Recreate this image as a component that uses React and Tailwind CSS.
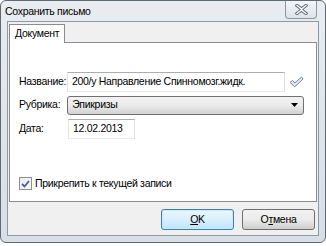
const CloseIcon = () => (
  <svg width="13" height="11" viewBox="0 0 13 11">
    <path d="M2 1.5L6.5 5L11 1.5M2 9.5L6.5 6L11 9.5" stroke="#5a6470" strokeWidth="3.2" strokeLinecap="square" fill="none" />
    <path d="M2 1.5L6.5 5L11 1.5M2 9.5L6.5 6L11 9.5" stroke="#ffffff" strokeWidth="1.4" strokeLinecap="square" fill="none" />
  </svg>
);

const CheckMark = () => (
  <svg width="15" height="12" viewBox="0 0 15 12">
    <path d="M1 6.5L3.5 4.5L5.8 7L12.5 1L14 3L5.8 10.8Z" fill="#e4e6f2" stroke="#7a86a8" strokeWidth="1" strokeLinejoin="round" />
  </svg>
);

const Arrow = () => (
  <svg width="7" height="4" viewBox="0 0 7 4">
    <path d="M0 0H7L3.5 4Z" fill="#000" />
  </svg>
);

export default function App() {
  return (
    <div className="w-[326px] h-[246px] bg-white tracking-[-0.3px]" style={{ fontFamily: '"Liberation Sans", Arial, sans-serif' }}>
      <div className="h-[243px] flex flex-col rounded-[6px] border border-[#5f6a76] bg-gradient-to-b from-[#e9edf1] via-[#dfe5eb] to-[#d7dee6] overflow-hidden">
        <div className="h-[20px] flex items-start justify-between">
          <span className="pl-[4px] pt-[3px] text-[10.5px] leading-[14px] text-black">Сохранить письмо</span>
          <div className="mr-[8px] w-[32px] h-[18px] flex items-center justify-center rounded-b-[4px] border border-t-0 border-[#8c96a2] bg-gradient-to-b from-[#f4f6f8] to-[#dde3e9]">
            <CloseIcon />
          </div>
        </div>
        <div className="flex-1 mx-[6px] mb-[6px] flex flex-col border border-[#8d99a7] bg-[#f0f0f0]">
          <div className="h-[20px] pl-[1px] pt-[2px] flex items-end">
            <div className="h-[19px] -mb-px relative z-10 px-[5px] flex items-center border border-b-0 border-[#898c95] bg-white text-[10.5px] text-black">
              Документ
            </div>
          </div>
          <div className="h-[160px] mx-[1px] border border-[#898c95] bg-white pl-[9px] pr-[12px] pt-[29px] flex flex-col text-[10.5px] text-black">
            <div className="flex items-center h-[20px]">
              <span className="w-[49px]">Название:</span>
              <div className="w-[223px] h-[20px] border border-[#abadb3] border-l-[#e2e3ea] border-r-[#dbdfe6] border-b-[#e3e9ef] flex items-center pl-[4px]">
                200/у Направление Спинномозг.жидк.
              </div>
              <div className="ml-[4px]"><CheckMark /></div>
            </div>
            <div className="flex items-center h-[20px] mt-[3px]">
              <span className="w-[49px]">Рубрика:</span>
              <div className="w-[241px] h-[19px] rounded-[3px] border border-[#707070] bg-gradient-to-b from-[#f2f2f2] via-[#ebebeb] to-[#d2d2d2] flex items-center justify-between pl-[4px] pr-[5px]">
                <span>Эпикризы</span>
                <Arrow />
              </div>
            </div>
            <div className="flex items-center h-[20px] mt-[4px]">
              <span className="w-[49px]">Дата:</span>
              <div className="w-[67px] h-[20px] border border-[#abadb3] border-l-[#e2e3ea] border-r-[#dbdfe6] border-b-[#e3e9ef] flex items-center pl-[4px]">
                12.02.2013
              </div>
            </div>
            <div className="flex items-center mt-[37px]">
              <div className="w-[13px] h-[13px] border border-[#8e8f8f] bg-gradient-to-br from-[#e8ecf0] to-[#f8f9fa] flex items-center justify-center">
                <svg width="9" height="8" viewBox="0 0 9 8"><path d="M1 4L3.5 6.5L8 1" stroke="#4a5f97" strokeWidth="1.8" fill="none" /></svg>
              </div>
              <span className="ml-[3px]">Прикрепить к текущей записи</span>
            </div>
          </div>
          <div className="flex-1 flex items-center justify-end gap-[8px] pr-[3px] pt-[2px] text-[10.5px] text-black">
            <div className="w-[73px] h-[21px] rounded-[3px] border border-[#3c7fb1] bg-gradient-to-b from-[#eaf6fd] via-[#d9f0fc] to-[#bee6fd] flex items-center justify-center shadow-[inset_0_0_0_1px_#c9e9fb]">
              <span><span className="underline">O</span>K</span>
            </div>
            <div className="w-[73px] h-[21px] rounded-[3px] border border-[#707070] bg-gradient-to-b from-[#f2f2f2] via-[#ebebeb] to-[#cfcfcf] flex items-center justify-center">
              <span>О<span className="underline">т</span>мена</span>
            </div>
          </div>
        </div>
      </div>
    </div>
  );
}
